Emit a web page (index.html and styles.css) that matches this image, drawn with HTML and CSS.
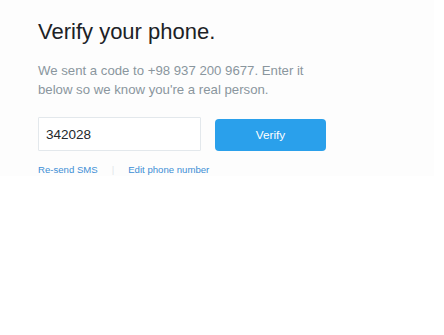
FILE: index.html
```html
<!DOCTYPE html>
<html>
<head>
<meta charset="utf-8">
<link rel="stylesheet" href="styles.css">
</head>
<body>
<div class="panel">
  <h1 class="title">Verify your phone.</h1>
  <p class="desc">We sent a code to +98 937 200 9677. Enter it<br>below so we know you're a real person.</p>
  <form class="row">
    <input class="code" type="text" value="342028">
    <button class="verify" type="button">Verify</button>
  </form>
  <div class="links">
    <a class="link" href="#">Re-send SMS</a>
    <span class="sep">|</span>
    <a class="link" href="#">Edit phone number</a>
  </div>
</div>
</body>
</html>
```
FILE: styles.css
```css
html, body {
  margin: 0;
  padding: 0;
  background: #ffffff;
}
body {
  font-family: "Liberation Sans", Arial, sans-serif;
}
.panel {
  width: 434px;
  height: 176px;
  box-sizing: border-box;
  padding: 19px 0 0 38px;
  background: #fdfdfd;
}
.title {
  margin: 0;
  font-size: 22px;
  line-height: 26px;
  font-weight: normal;
  color: #1c2226;
}
.desc {
  margin: 17px 0 0 0;
  font-size: 13.2px;
  line-height: 18.5px;
  color: #8a969e;
}
.row {
  margin: 18px 0 0 0;
  display: flex;
  align-items: flex-end;
  gap: 14px;
}
.code {
  box-sizing: border-box;
  width: 163px;
  height: 34px;
  margin: 0;
  padding: 0 0 0 7px;
  border: 1px solid #e3e8ec;
  border-radius: 1px;
  background: #ffffff;
  font-family: "Liberation Sans", Arial, sans-serif;
  font-size: 13.5px;
  color: #23282c;
  outline: none;
}
.verify {
  width: 111px;
  height: 32px;
  margin: 0;
  padding: 0;
  border: none;
  border-radius: 4px;
  background: #2aa0eb;
  color: #ffffff;
  font-family: "Liberation Sans", Arial, sans-serif;
  font-size: 11.8px;
}
.links {
  margin-top: 12px;
  display: flex;
  align-items: baseline;
  font-size: 9.6px;
  line-height: 14px;
}
.link {
  color: #3e8fd5;
  text-decoration: none;
}
.sep {
  color: #e0e5e9;
  margin: 0 14px 0 14px;
}
```
